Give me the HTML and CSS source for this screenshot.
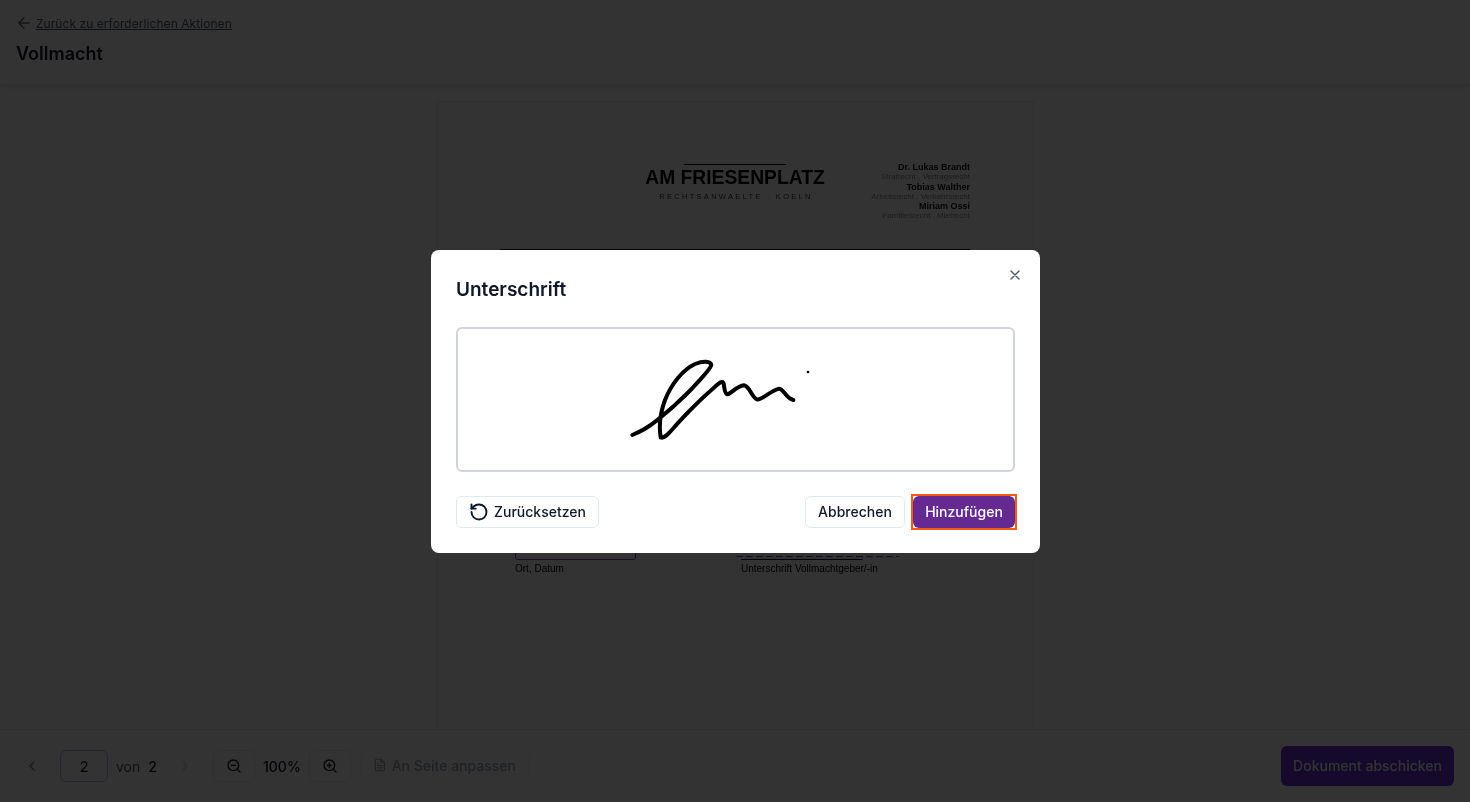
FILE: index.html
```html
<!DOCTYPE html>
<html lang="de">
<head>
  <meta charset="UTF-8">
  <title>Vollmacht</title>
  <link rel="stylesheet" href="styles.css">
</head>
<body>
  <header class="topbar">
    <a class="back" href="#">
      <svg class="back-icon" viewBox="0 0 24 24"><path d="M19 12H5M12 19l-7-7 7-7"/></svg>
      <span>Zurück zu erforderlichen Aktionen</span>
    </a>
    <h1 class="page-title">Vollmacht</h1>
  </header>

  <main class="viewer">
    <div class="sheet">
      <div class="letterhead">
        <div class="brand">
          <div class="brand-rule"></div>
          <div class="brand-name">AM FRIESENPLATZ</div>
          <div class="brand-sub">RECHTSANWAELTE . KOELN</div>
        </div>
        <div class="lawyers">
          <b>Dr. Lukas Brandt</b>
          <span>Strafrecht . Vertragsrecht</span>
          <b>Tobias Walther</b>
          <span>Arbeitsrecht . Verkehrsrecht</span>
          <b>Miriam Ossi</b>
          <span>Familienrecht . Mietrecht</span>
        </div>
      </div>
      <div class="head-rule"></div>
      <div class="sign-row">
        <div class="sign-col sign-place">
          <div class="field-box"></div>
          <div class="sign-label">Ort, Datum</div>
        </div>
        <div class="sign-col sign-name">
          <div class="field-dashed"></div>
          <div class="field-line"></div>
          <div class="sign-label">Unterschrift Vollmachtgeber/-in</div>
        </div>
      </div>
    </div>
  </main>

  <footer class="toolbar">
    <div class="pager">
      <svg class="chev" viewBox="0 0 24 24"><path d="M15 18l-6-6 6-6"/></svg>
      <div class="page-input">2</div>
      <span class="von">von</span>
      <span class="total">2</span>
      <svg class="chev chev-next" viewBox="0 0 24 24"><path d="M9 18l6-6-6-6"/></svg>
    </div>
    <div class="zoom">
      <button class="tool-btn">
        <svg viewBox="0 0 24 24"><circle cx="11" cy="11" r="8"/><path d="M21 21l-4.3-4.3M8 11h6"/></svg>
      </button>
      <span class="zoom-value">100%</span>
      <button class="tool-btn">
        <svg viewBox="0 0 24 24"><circle cx="11" cy="11" r="8"/><path d="M21 21l-4.3-4.3M11 8v6M8 11h6"/></svg>
      </button>
    </div>
    <button class="fit-btn">
      <svg viewBox="0 0 24 24"><path d="M15 2H6a2 2 0 0 0-2 2v16a2 2 0 0 0 2 2h12a2 2 0 0 0 2-2V7z"/><path d="M14 2v5h6M16 13H8M16 17H8M10 9H8"/></svg>
      An Seite anpassen
    </button>
    <button class="submit-btn">Dokument abschicken</button>
  </footer>

  <div class="overlay">
    <div class="modal">
      <button class="close">
        <svg viewBox="0 0 24 24"><path d="M18 6L6 18M6 6l12 12"/></svg>
      </button>
      <h2 class="modal-title">Unterschrift</h2>
      <div class="pad">
        <svg class="signature" viewBox="0 0 600 300">
          <path d="M37 255 C62 245 85 232 110 212 C150 180 195 140 235 95 C250 78 270 58 274 45 C272 33 250 32 225 42 C190 58 155 100 135 150 C122 185 116 225 122 262 C135 268 150 245 175 218 C205 185 250 140 285 110 C295 100 305 92 310 98 C314 110 312 130 322 133 C335 130 350 108 372 106 C388 108 395 140 410 148 C425 152 450 122 478 116 C492 118 498 145 520 150"/>
          <circle cx="564" cy="66" r="4"/>
        </svg>
      </div>
      <div class="modal-actions">
        <button class="btn reset">
          <svg viewBox="0 0 24 24"><path d="M3 12a9 9 0 1 0 9-9 9.75 9.75 0 0 0-6.74 2.74L3 8"/><path d="M3 3v5h5"/></svg>
          Zurücksetzen
        </button>
        <button class="btn cancel">Abbrechen</button>
        <span class="focus-ring"><button class="btn add">Hinzufügen</button></span>
      </div>
    </div>
  </div>
</body>
</html>
```

FILE: styles.css
```css
* {
  box-sizing: border-box;
}
body {
  margin: 0;
  height: 802px;
  overflow: hidden;
  display: flex;
  flex-direction: column;
  background: #fff;
  font-family: Inter, "Liberation Sans", sans-serif;
  color: #0f172a;
}
button {
  font-family: inherit;
}
svg {
  fill: none;
  stroke: currentColor;
  stroke-width: 2;
  stroke-linecap: round;
  stroke-linejoin: round;
}

/* top bar */
.topbar {
  height: 84px;
  padding: 15px 16px 0;
  flex-shrink: 0;
  box-shadow: 0 1px 6px rgba(0, 0, 0, 0.15);
  position: relative;
  will-change: transform;
}
.back {
  display: flex;
  align-items: center;
  gap: 3px;
  height: 16px;
  margin-left: -1px;
  color: #475569;
  font-size: 12px;
  letter-spacing: 0.06px;
}
.back span {
  text-decoration: underline;
}
.back-icon {
  width: 18px;
  height: 18px;
  color: #64748b;
}
.page-title {
  margin: 9px 0 0;
  font-size: 18px;
  line-height: 28px;
  font-weight: 600;
}

/* document */
.viewer {
  flex: 1;
  min-height: 0;
  overflow: hidden;
  padding-top: 17px;
  background: #fdfdfd;
}
.sheet {
  width: 597px;
  height: 800px;
  margin-left: 437px;
  padding: 60px 63px 0 60px;
  background: #fff;
  border: 1px solid #e2e8f0;
  font-family: "Liberation Sans", sans-serif;
  color: #000;
}
.letterhead {
  display: flex;
  justify-content: flex-end;
  height: 60px;
  filter: blur(0.3px);
}
.brand {
  width: 180px;
  margin-right: 45px;
  text-align: center;
}
.brand-rule {
  width: 102px;
  height: 1px;
  margin: 2px auto 0;
  background: #200;
}
.brand-name {
  font-size: 19.3px;
  font-weight: 700;
  line-height: 25px;
}
.brand-sub {
  margin-top: 1px;
  padding-left: 2px;
  font-size: 7.5px;
  letter-spacing: 2.3px;
  color: #333;
  line-height: 12px;
}
.lawyers {
  width: 100px;
  display: flex;
  flex-direction: column;
  align-items: flex-end;
  white-space: nowrap;
  font-size: 8px;
  line-height: 8.5px;
  color: #888;
}
.lawyers b {
  font-size: 9px;
  line-height: 11px;
  color: #111;
}
.head-rule {
  height: 1px;
  margin: 27px 0 0 2px;
  background: #101828;
}
.sign-row {
  display: flex;
  margin: 296px 0 0 17px;
  font-size: 10px;
  filter: blur(0.3px);
}
.sign-col {
  display: flex;
  flex-direction: column;
}
.sign-place {
  width: 226px;
}
.sign-name {
  width: 163px;
}
.field-box {
  width: 121px;
  height: 14px;
  border: 1px solid #7a2ff0;
  border-radius: 3px;
}
.field-dashed {
  height: 1px;
  margin: 10px 0 0 -5px;
  width: 163px;
  background: repeating-linear-gradient(90deg, #7a2ff0 0 7px, transparent 7px 10px);
}
.field-line {
  width: 122px;
  height: 1px;
  margin-top: 2px;
  background: #111;
}
.sign-label {
  margin-top: 3px;
  line-height: 12px;
}

/* bottom bar */
.toolbar {
  height: 73px;
  flex-shrink: 0;
  display: flex;
  align-items: center;
  padding: 0 16px 0 24px;
  border-top: 1px solid #e2e8f0;
  background: #fff;
  position: relative;
  font-size: 14px;
  will-change: transform;
}
.pager {
  display: flex;
  align-items: center;
  width: 189px;
}
.chev {
  width: 16px;
  height: 16px;
  color: #64748b;
}
.chev-next {
  color: #cbd5e1;
  margin-left: 20px;
}
.page-input {
  width: 48px;
  height: 32px;
  margin-left: 20px;
  border: 1px solid #b4b8e8;
  border-radius: 6px;
  display: flex;
  align-items: center;
  justify-content: center;
  font-size: 15px;
}
.von {
  margin-left: 8px;
  color: #475569;
}
.total {
  margin-left: 8px;
  font-weight: 500;
}
.zoom {
  display: flex;
  align-items: center;
  gap: 8px;
}
.tool-btn {
  width: 42px;
  height: 32px;
  padding: 0;
  border: 1px solid #e2e8f0;
  border-radius: 6px;
  background: #fff;
  display: flex;
  align-items: center;
  justify-content: center;
  color: #0f172a;
}
.tool-btn svg {
  width: 16px;
  height: 16px;
}
.zoom-value {
  width: 38px;
  font-weight: 500;
  font-size: 14px;
}
.fit-btn {
  display: flex;
  align-items: center;
  gap: 5px;
  width: 169px;
  height: 32px;
  margin-left: 9px;
  padding: 0 12px 2px;
  border: 1px solid #f1f5f9;
  border-radius: 6px;
  background: #fff;
  color: #94a3b8;
  font-size: 14px;
  font-weight: 500;
  white-space: nowrap;
}
.fit-btn svg {
  width: 16px;
  height: 16px;
}
.submit-btn {
  margin-left: auto;
  width: 173px;
  height: 40px;
  padding: 0 0 2px;
  border: 0;
  border-radius: 6px;
  background: #6b2fdc;
  color: #fff;
  font-size: 14px;
  font-weight: 500;
}

/* dialog */
.overlay {
  position: fixed;
  inset: 0;
  display: flex;
  align-items: center;
  justify-content: center;
  padding: 1px 0 0 1px;
  background: rgba(0, 0, 0, 0.8);
}
.modal {
  position: relative;
  width: 609px;
  height: 303px;
  padding: 26px 25px 24px;
  background: #fff;
  border-radius: 8px;
  will-change: transform;
}
.close {
  position: absolute;
  top: 17px;
  right: 17px;
  width: 16px;
  height: 16px;
  padding: 0;
  border: 0;
  background: none;
  color: #475569;
}
.close svg {
  display: block;
  width: 16px;
  height: 16px;
}
.modal-title {
  margin: 0 0 23px;
  font-size: 19px;
  line-height: 28px;
  font-weight: 600;
}
.pad {
  position: relative;
  height: 145px;
  border: 2px solid #d1d5db;
  border-radius: 6px;
}
.signature {
  position: absolute;
  left: 162px;
  top: 21px;
  width: 200px;
  height: 100px;
  stroke: #000;
  stroke-width: 12;
}
.signature circle {
  fill: #000;
  stroke: none;
}
.modal-actions {
  display: flex;
  align-items: center;
  gap: 6px;
  margin-top: 24px;
}
.btn {
  height: 32px;
  padding: 0 12px 2px;
  display: flex;
  align-items: center;
  border: 1px solid #e2e8f0;
  border-radius: 6px;
  background: #fff;
  color: #0f172a;
  font-size: 14px;
  font-weight: 500;
  white-space: nowrap;
}
.reset {
  gap: 5px;
  width: 143px;
}
.reset svg {
  width: 20px;
  height: 20px;
  flex-shrink: 0;
  stroke-width: 2.3;
  margin-top: 2px;
}
.cancel {
  margin-left: auto;
  width: 100px;
  justify-content: center;
}
.focus-ring {
  display: block;
  margin: -2px -2px -2px 0;
  border: 2px solid #f05a14;
}
.add {
  width: 102px;
  justify-content: center;
  border: 0;
  background: #642a92;
  color: #fff;
}
```
